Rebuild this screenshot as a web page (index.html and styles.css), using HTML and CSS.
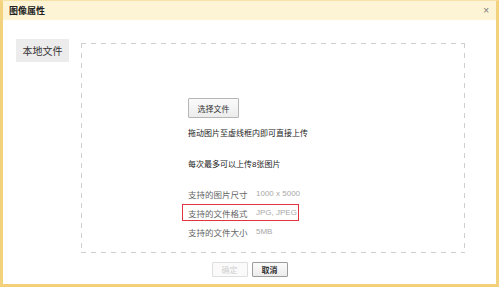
FILE: index.html
```html
<!DOCTYPE html>
<html>
<head>
<meta charset="utf-8">
<link rel="stylesheet" href="styles.css">
</head>
<body>
<div class="dialog">
  <div class="titlebar">
    <span class="title">图像属性</span>
    <span class="close">×</span>
  </div>
  <div class="main">
    <div class="tab">本地文件</div>
    <div class="dropzone">
      <div class="inner">
        <button class="btn pick">选择文件</button>
        <div class="line l1">拖动图片至虚线框内即可直接上传</div>
        <div class="line l2">每次最多可以上传8张图片</div>
        <div class="info first"><span class="label">支持的图片尺寸</span><span class="value">1000 x 5000</span></div>
        <div class="info"><span class="mark"><span class="label">支持的文件格式</span><span class="value">JPG, JPEG</span></span></div>
        <div class="info"><span class="label">支持的文件大小</span><span class="value">5MB</span></div>
      </div>
    </div>
  </div>
  <div class="footer">
    <button class="btn small disabled">确定</button>
    <button class="btn small">取消</button>
  </div>
</div>
</body>
</html>
```
FILE: styles.css
```css
html, body {
  margin: 0;
  padding: 0;
  background: #ffffff;
}
body {
  font-family: "Liberation Sans", "Noto Sans CJK SC", sans-serif;
  color: #333;
}
.dialog {
  width: 499px;
  height: 287px;
  box-sizing: border-box;
  border-left: 3px solid #f3d27e;
  border-right: 3px solid #f3d27e;
  border-bottom: 3px solid #f3cf7a;
  border-top: 1px solid #f7e3a8;
  display: flex;
  flex-direction: column;
  background: #fff;
}
.titlebar {
  height: 19px;
  background: #fdf4d6;
  display: flex;
  align-items: center;
  justify-content: space-between;
  padding: 0 7px 0 6px;
}
.title {
  font-size: 9px;
  font-weight: bold;
  color: #222;
}
.close {
  font-size: 10px;
  color: #777;
  line-height: 1;
}
.main {
  display: flex;
  padding: 19px 0 0 13px;
}
.tab {
  width: 53px;
  height: 23px;
  background: #ececec;
  font-size: 10px;
  color: #333;
  display: flex;
  align-items: center;
  justify-content: center;
}
.dropzone {
  margin: 4px 0 0 12px;
  width: 384px;
  height: 210px;
  box-sizing: border-box;
  background-image:
    repeating-linear-gradient(90deg, #cfcfcf 0 5px, transparent 5px 10px),
    repeating-linear-gradient(90deg, #cfcfcf 0 5px, transparent 5px 10px),
    repeating-linear-gradient(180deg, #cfcfcf 0 5px, transparent 5px 10px),
    repeating-linear-gradient(180deg, #cfcfcf 0 5px, transparent 5px 10px);
  background-size: 100% 1px, 100% 1px, 1px 100%, 1px 100%;
  background-position: 0 0, 0 100%, 0 0, 100% 0;
  background-repeat: no-repeat;
}
.inner {
  padding: 55px 0 0 107px;
  display: flex;
  flex-direction: column;
  align-items: flex-start;
}
.btn {
  font-family: "Liberation Sans", "Noto Sans CJK SC", sans-serif;
  font-size: 8px;
  color: #333;
  background: linear-gradient(#fbfbfb, #ececec);
  border: 1px solid #b5b5b5;
  border-radius: 1px;
  padding: 0;
  margin: 0;
}
.pick {
  width: 51px;
  height: 20px;
}
.line {
  font-size: 8px;
  line-height: 12px;
  color: #222;
}
.l1 {
  margin-top: 10px;
}
.l2 {
  margin-top: 19px;
}
.info {
  height: 19px;
  display: flex;
  align-items: center;
  font-size: 8.5px;
}
.info.first {
  margin-top: 13px;
}
.label {
  color: #666666;
  width: 60px;
  white-space: nowrap;
}
.value {
  color: #a8a8a8;
  margin-left: 8px;
  font-size: 8px;
}
.mark {
  display: flex;
  align-items: center;
  height: 15px;
  margin-left: -6px;
  padding: 0 1px 0 5px;
  border: 1px solid #e0343e;
}
.footer {
  display: flex;
  justify-content: center;
  gap: 4px;
  margin-top: 9px;
}
.small {
  width: 36px;
  height: 15px;
  border-color: #9c9c9c;
  font-weight: bold;
}
.small.disabled {
  color: #d0d0d0;
  border-color: #dedede;
  background: #fafafa;
  font-weight: normal;
}
```
